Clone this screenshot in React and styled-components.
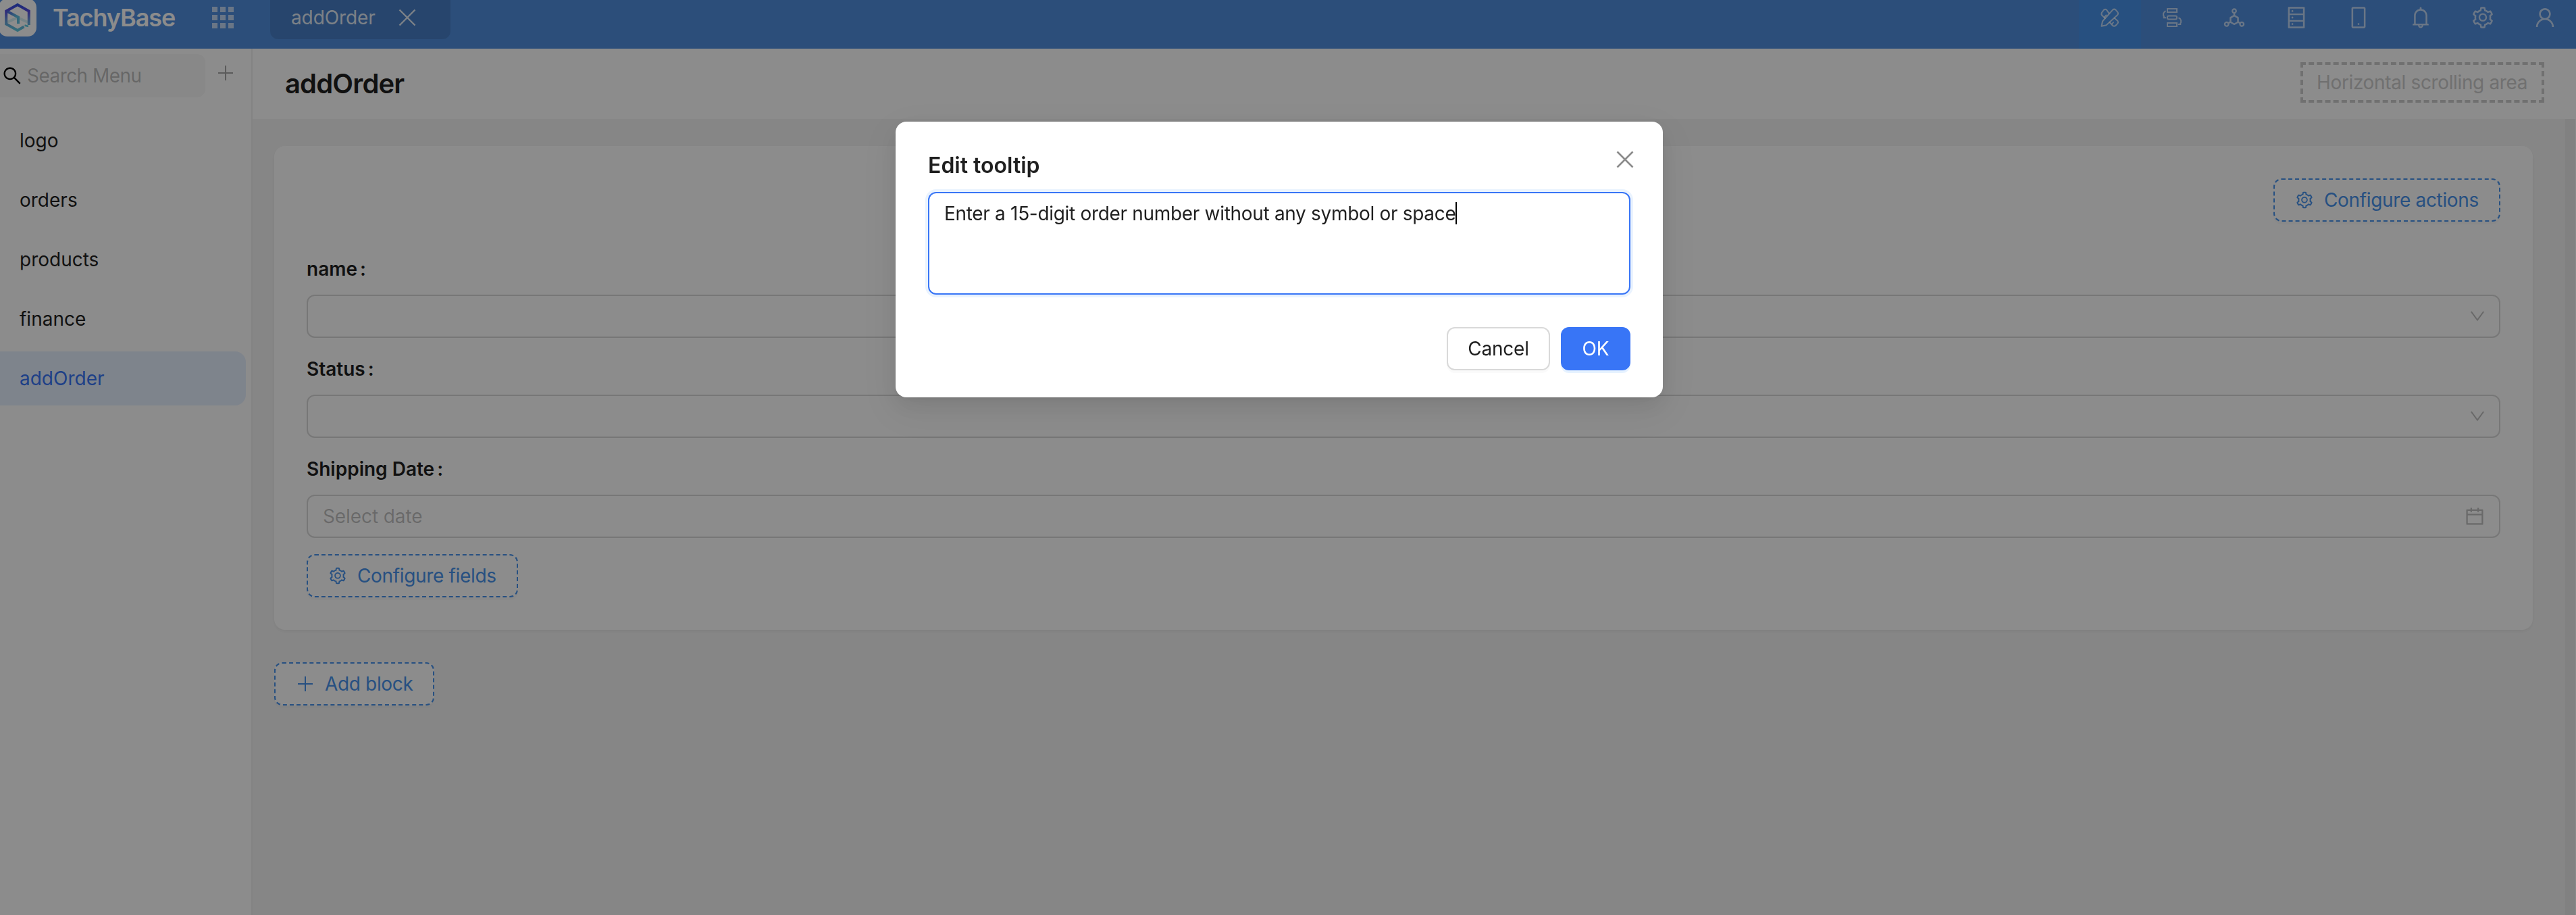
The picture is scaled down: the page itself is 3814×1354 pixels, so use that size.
import React from "react";
import styled, { createGlobalStyle } from "styled-components";
import {
  AiOutlineBell,
  AiOutlineCalendar,
  AiOutlineDatabase,
  AiOutlineDeploymentUnit,
  AiOutlineMobile,
  AiOutlineSearch,
  AiOutlineSetting,
  AiOutlineUser,
} from "react-icons/ai";

const color = {
  header: "#508ede",
  designer: "#4893ec",
  primary: "#3875f6",
  text: "#1f1f1f",
  placeholder: "rgba(0, 0, 0, 0.25)",
  border: "#d9d9d9",
  layout: "#f5f5f5",
};

const GlobalStyle = createGlobalStyle`
  *, *::before, *::after { box-sizing: border-box; }
  body {
    margin: 0;
    overflow: hidden;
    font-family: Inter, "Liberation Sans", sans-serif;
    font-size: 28px;
    line-height: 44px;
    color: ${color.text};
  }
  svg { display: block; flex: none; }
`;

const Page = styled.div`
  display: flex;
  flex-direction: column;
  height: 1354px;
  background: ${color.layout};
`;

/* Header */

const Header = styled.header`
  display: flex;
  align-items: center;
  height: 72px;
  flex: none;
  padding-bottom: 20px;
  overflow: hidden;
  background: ${color.header};
`;

const LogoTile = styled.div`
  flex: none;
  width: 56px;
  height: 56px;
  margin-left: -2px;
  border-radius: 13px;
  background: #fff;
`;

const Brand = styled.div`
  width: 236px;
  margin-left: 24px;
  font-size: 36px;
  font-weight: 600;
  letter-spacing: -1.1px;
  color: #fff;
`;

const AppsIcon = styled.div`
  display: grid;
  grid-template-columns: repeat(3, 8px);
  grid-auto-rows: 8px;
  gap: 4px;
`;

const AppsCell = styled.i`
  background: rgba(255, 255, 255, 0.65);
`;

const PageTab = styled.div`
  display: flex;
  align-items: center;
  align-self: flex-start;
  gap: 34px;
  width: 267px;
  height: 58px;
  margin-left: 54px;
  padding: 0 0 6px 31px;
  border-radius: 0 0 12px 12px;
  background: rgba(0, 0, 0, 0.1);
  color: rgba(255, 255, 255, 0.85);
`;

const TabName = styled.span`
  width: 125px;
  letter-spacing: -0.1px;
`;

const HeaderActions = styled.nav`
  display: flex;
  align-self: flex-start;
  margin-left: auto;
`;

const HeaderAction = styled.div`
  display: flex;
  justify-content: center;
  width: 92px;
  height: 72px;
  padding-top: 8px;
  background: ${(p) => (p.$active ? "#4892e9" : "transparent")};
  color: rgba(255, 255, 255, 0.65);
`;

/* Sidebar */

const Body = styled.div`
  display: flex;
  flex: 1;
  min-height: 0;
`;

const Sidebar = styled.aside`
  flex: none;
  width: 374px;
  border-right: 2px solid #efefef;
  background: #fff;
`;

const SearchRow = styled.div`
  display: flex;
  padding-top: 8px;
`;

const SearchBox = styled.div`
  display: flex;
  align-items: center;
  gap: 6px;
  width: 304px;
  height: 64px;
  padding-left: 2px;
  border-radius: 0 12px 12px 0;
  background: #f8f8f8;
  color: #000;
`;

const SearchHint = styled.span`
  letter-spacing: -0.55px;
  color: ${color.placeholder};
`;

const AddMenu = styled.div`
  margin: 14px 0 0 16px;
  color: rgba(0, 0, 0, 0.35);
`;

const Menu = styled.ul`
  display: flex;
  flex-direction: column;
  gap: 8px;
  margin: 24px 0 0;
  padding: 0;
  list-style: none;
`;

const MenuItem = styled.li`
  width: 364px;
  height: 80px;
  padding-left: 29px;
  line-height: 80px;
  border-radius: 0 16px 16px 0;
  background: ${(p) => (p.$selected ? "#e6f0ff" : "transparent")};
  color: ${(p) => (p.$selected ? color.primary : color.text)};
`;

/* Main */

const Main = styled.main`
  display: flex;
  flex-direction: column;
  flex: 1;
`;

const TitleBar = styled.div`
  display: flex;
  align-items: flex-start;
  justify-content: space-between;
  height: 104px;
  padding: 20px 47px 0 48px;
  background: #fff;
`;

const PageTitle = styled.h1`
  margin: 0;
  font-size: 40px;
  line-height: 64px;
  font-weight: 600;
  letter-spacing: -0.85px;
`;

const ScrollArea = styled.div`
  width: 361px;
  height: 60px;
  padding-left: 20px;
  border: 4px dashed #ccc;
  line-height: 52px;
  letter-spacing: -0.36px;
  white-space: nowrap;
  color: #ccc;
`;

const Scroller = styled.div`
  display: flex;
  flex: 1;
`;

const Content = styled.div`
  display: flex;
  flex-direction: column;
  align-items: flex-start;
  gap: 48px;
  flex: 1;
  padding: 40px 48px 0 32px;
`;

const ScrollTrack = styled.div`
  width: 16px;
  border-right: 1px solid #fafafa;
  background: #ebebeb;
`;

const Card = styled.section`
  display: flex;
  flex-direction: column;
  align-items: flex-start;
  gap: 24px;
  align-self: stretch;
  padding: 48px;
  border-radius: 16px;
  background: #fff;
  box-shadow: 0 2px 4px 0 rgba(0, 0, 0, 0.03), 0 2px 12px -2px rgba(0, 0, 0, 0.02),
    0 4px 8px 0 rgba(0, 0, 0, 0.02);
`;

const ActionsRow = styled.div`
  display: flex;
  justify-content: flex-end;
  align-self: stretch;
  padding-bottom: 24px;
`;

const DashedButton = styled.button`
  display: flex;
  align-items: center;
  gap: 15px;
  width: ${(p) => p.$width}px;
  height: 64px;
  padding: 0 0 0 30px;
  border: 2px dashed ${color.designer};
  border-radius: 12px;
  background: #fff;
  box-shadow: 0 4px 0 rgba(0, 0, 0, 0.02);
  font: inherit;
  letter-spacing: -0.34px;
  white-space: nowrap;
  color: ${color.designer};
`;

const Field = styled.div`
  display: flex;
  flex-direction: column;
  gap: 16px;
  align-self: stretch;
`;

const Label = styled.label`
  display: flex;
  gap: 4px;
  font-weight: 600;
`;

const Control = styled.div`
  display: flex;
  align-items: center;
  justify-content: space-between;
  height: 64px;
  padding: 0 ${(p) => (p.$date ? 20 : 22)}px 0 22px;
  border: 2px solid ${color.border};
  border-radius: 12px;
  letter-spacing: -0.1px;
  color: ${color.placeholder};
`;

/* Modal */

const Mask = styled.div`
  position: fixed;
  inset: 0;
  background: rgba(0, 0, 0, 0.45);
`;

const ModalWrap = styled.div`
  position: fixed;
  inset: 0;
  display: flex;
  justify-content: flex-start;
  align-items: flex-start;
  padding: 180px 0 0 1326px;
`;

const Dialog = styled.div`
  display: flex;
  flex-direction: column;
  width: 1136px;
  height: 408px;
  padding: 40px 48px;
  border-radius: 16px;
  background: #fff;
  box-shadow: 0 12px 32px 0 rgba(0, 0, 0, 0.08), 0 6px 12px -8px rgba(0, 0, 0, 0.12),
    0 18px 56px 16px rgba(0, 0, 0, 0.05);
`;

const DialogHead = styled.div`
  display: flex;
  justify-content: space-between;
  align-items: flex-start;
  height: 48px;
  color: #8c8c8c;
`;

const DialogTitle = styled.h2`
  margin: 0;
  font-size: 32px;
  line-height: 49px;
  font-weight: 600;
  color: ${color.text};
`;

const CloseButton = styled.div`
  margin: 3px -5px 0 0;
`;

const Editor = styled.div`
  display: flex;
  height: 152px;
  margin-top: 16px;
  padding: 8px 0 0 22px;
  border: 2px solid ${color.primary};
  border-radius: 12px;
  box-shadow: 0 0 0 4px #eaf3fe;
  letter-spacing: -0.315px;
  white-space: nowrap;
`;

const Caret = styled.span`
  width: 2px;
  height: 33px;
  margin-top: 5px;
  background: #000;
`;

const DialogFoot = styled.div`
  display: flex;
  justify-content: flex-end;
  gap: 16px;
  margin-top: 48px;
`;

const DialogButton = styled.button`
  width: ${(p) => (p.$primary ? 103 : 153)}px;
  height: 64px;
  padding: 0;
  border: 2px solid ${(p) => (p.$primary ? color.primary : color.border)};
  border-radius: 12px;
  background: ${(p) => (p.$primary ? color.primary : "#fff")};
  box-shadow: 0 4px 0 ${(p) => (p.$primary ? "rgba(5, 125, 255, 0.1)" : "rgba(0, 0, 0, 0.02)")};
  font: inherit;
  letter-spacing: -0.2px;
  color: ${(p) => (p.$primary ? "#fff" : color.text)};
`;

/* Icons */

const LogoMark = () => (
  <svg width="56" height="56" viewBox="-2 -2 56 56" fill="none" strokeWidth="4">
    <defs>
      <linearGradient id="logo-edge" gradientUnits="userSpaceOnUse" x1="26" y1="5" x2="26" y2="46">
        <stop offset="0" stopColor="#2c50e0" />
        <stop offset="0.3" stopColor="#5a4be0" />
        <stop offset="0.65" stopColor="#669fd8" />
        <stop offset="1" stopColor="#5fcbe0" />
      </linearGradient>
      <linearGradient id="logo-arm" gradientUnits="userSpaceOnUse" x1="9" y1="16" x2="27" y2="32">
        <stop offset="0" stopColor="#4b56dc" />
        <stop offset="0.7" stopColor="#5fc0e0" />
      </linearGradient>
    </defs>
    <path d="M9.5 33.5 26 26l16.500 7.500" stroke="#d6eef4" />
    <path d="M42.800 37V16.500L26 7 9.200 16.500v19L26 45l9.500-5.500" stroke="url(#logo-edge)" />
    <path d="M36.500 37.500l5.500 1.500" stroke="#5fcbe0" strokeWidth="2.500" />
    <path d="M10 16.500 27 25.500v9.500" stroke="url(#logo-arm)" />
  </svg>
);

const DesignIcon = () => (
  <svg width="36" height="36" viewBox="0 0 36 36" fill="none" stroke="currentColor" strokeWidth="2" strokeLinejoin="round" strokeLinecap="round">
    <path d="M5.500 30.700 7 23.500 22.300 6.400q2-1.600 4 0l3 3.400q1.500 2.200 0 4.200L12.500 29.300z" />
    <path d="M16.600 11.600 13 6.600q-2-1.600-4 0L6 10.500q-1.200 2.200 0 4l4.700 4.600" />
    <path d="M24.500 18.800 29.500 23q1.200 1.800 0 3.600L26 30.200q-2 1.200-3.800 0L17.600 25" />
    <path d="M9.600 17.500l2.800-3M21 27.500l2-2.500" />
  </svg>
);

const FlowIcon = () => (
  <svg width="36" height="36" viewBox="0 0 36 36" fill="none" stroke="currentColor" strokeWidth="2">
    <path d="M11 5h14v5H11zM11 26h14v5H11z" />
    <rect x="11" y="15.500" width="14" height="5" rx="2" />
    <path d="M8.500 8.200C4.500 10.500 4.300 14 6.200 17.500M4.800 18.200h4.400M27.500 18.200c4 1.500 5 6 2.300 9.500M31.300 28h-4.500" />
  </svg>
);

const CloseIcon = ({ weight }) => (
  <svg width="26" height="26" viewBox="0 0 26 26" stroke="currentColor" strokeWidth={weight}>
    <path d="M1.500 1.500l23 23M24.500 1.500l-23 23" />
  </svg>
);

const PlusIcon = () => (
  <svg width="28" height="28" viewBox="0 0 28 28" stroke="currentColor" strokeWidth="2">
    <path d="M3 14h22M14 3v22" />
  </svg>
);

const ChevronIcon = () => (
  <svg width="20" height="16" viewBox="0 0 20 16" fill="none" stroke="currentColor" strokeWidth="2">
    <path d="M.8 1.200 10 13.500 19.200 1.200" />
  </svg>
);

const menuItems = ["logo", "orders", "products", "finance", "addOrder"];

const headerIcons = [
  DesignIcon,
  FlowIcon,
  AiOutlineDeploymentUnit,
  AiOutlineDatabase,
  AiOutlineMobile,
  AiOutlineBell,
  AiOutlineSetting,
  AiOutlineUser,
];

const fields = [
  { label: "name" },
  { label: "Status" },
  { label: "Shipping Date", date: true },
];

export default function App() {
  return (
    <>
      <GlobalStyle />
      <Page>
        <Header>
          <LogoTile>
            <LogoMark />
          </LogoTile>
          <Brand>TachyBase</Brand>
          <AppsIcon>
            {Array.from({ length: 9 }, (_, i) => (
              <AppsCell key={i} />
            ))}
          </AppsIcon>
          <PageTab>
            <TabName>addOrder</TabName>
            <CloseIcon weight={2.4} />
          </PageTab>
          <HeaderActions>
            {headerIcons.map((Icon, i) => (
              <HeaderAction key={i} $active={i === 0}>
                <Icon size={36} />
              </HeaderAction>
            ))}
          </HeaderActions>
        </Header>
        <Body>
          <Sidebar>
            <SearchRow>
              <SearchBox>
                <AiOutlineSearch size={32} />
                <SearchHint>Search Menu</SearchHint>
              </SearchBox>
              <AddMenu>
                <PlusIcon />
              </AddMenu>
            </SearchRow>
            <Menu>
              {menuItems.map((item) => (
                <MenuItem key={item} $selected={item === "addOrder"}>
                  {item}
                </MenuItem>
              ))}
            </Menu>
          </Sidebar>
          <Main>
            <TitleBar>
              <PageTitle>addOrder</PageTitle>
              <ScrollArea>Horizontal scrolling area</ScrollArea>
            </TitleBar>
            <Scroller>
              <Content>
                <Card>
                  <ActionsRow>
                    <DashedButton $width={336}>
                      <AiOutlineSetting size={28} />
                      Configure actions
                    </DashedButton>
                  </ActionsRow>
                  {fields.map((field) => (
                    <Field key={field.label}>
                      <Label>
                        <span>{field.label}</span>
                        <span>:</span>
                      </Label>
                      <Control $date={field.date}>
                        <span>{field.date ? "Select date" : ""}</span>
                        {field.date ? <AiOutlineCalendar size={32} /> : <ChevronIcon />}
                      </Control>
                    </Field>
                  ))}
                  <DashedButton $width={313}>
                    <AiOutlineSetting size={28} />
                    Configure fields
                  </DashedButton>
                </Card>
                <DashedButton $width={237}>
                  <PlusIcon />
                  Add block
                </DashedButton>
              </Content>
              <ScrollTrack />
            </Scroller>
          </Main>
        </Body>
      </Page>
      <Mask />
      <ModalWrap>
        <Dialog>
          <DialogHead>
            <DialogTitle>Edit tooltip</DialogTitle>
            <CloseButton>
              <CloseIcon weight={2.6} />
            </CloseButton>
          </DialogHead>
          <Editor>
            <span>Enter a 15-digit order number without any symbol or space</span>
            <Caret />
          </Editor>
          <DialogFoot>
            <DialogButton>Cancel</DialogButton>
            <DialogButton $primary>OK</DialogButton>
          </DialogFoot>
        </Dialog>
      </ModalWrap>
    </>
  );
}
